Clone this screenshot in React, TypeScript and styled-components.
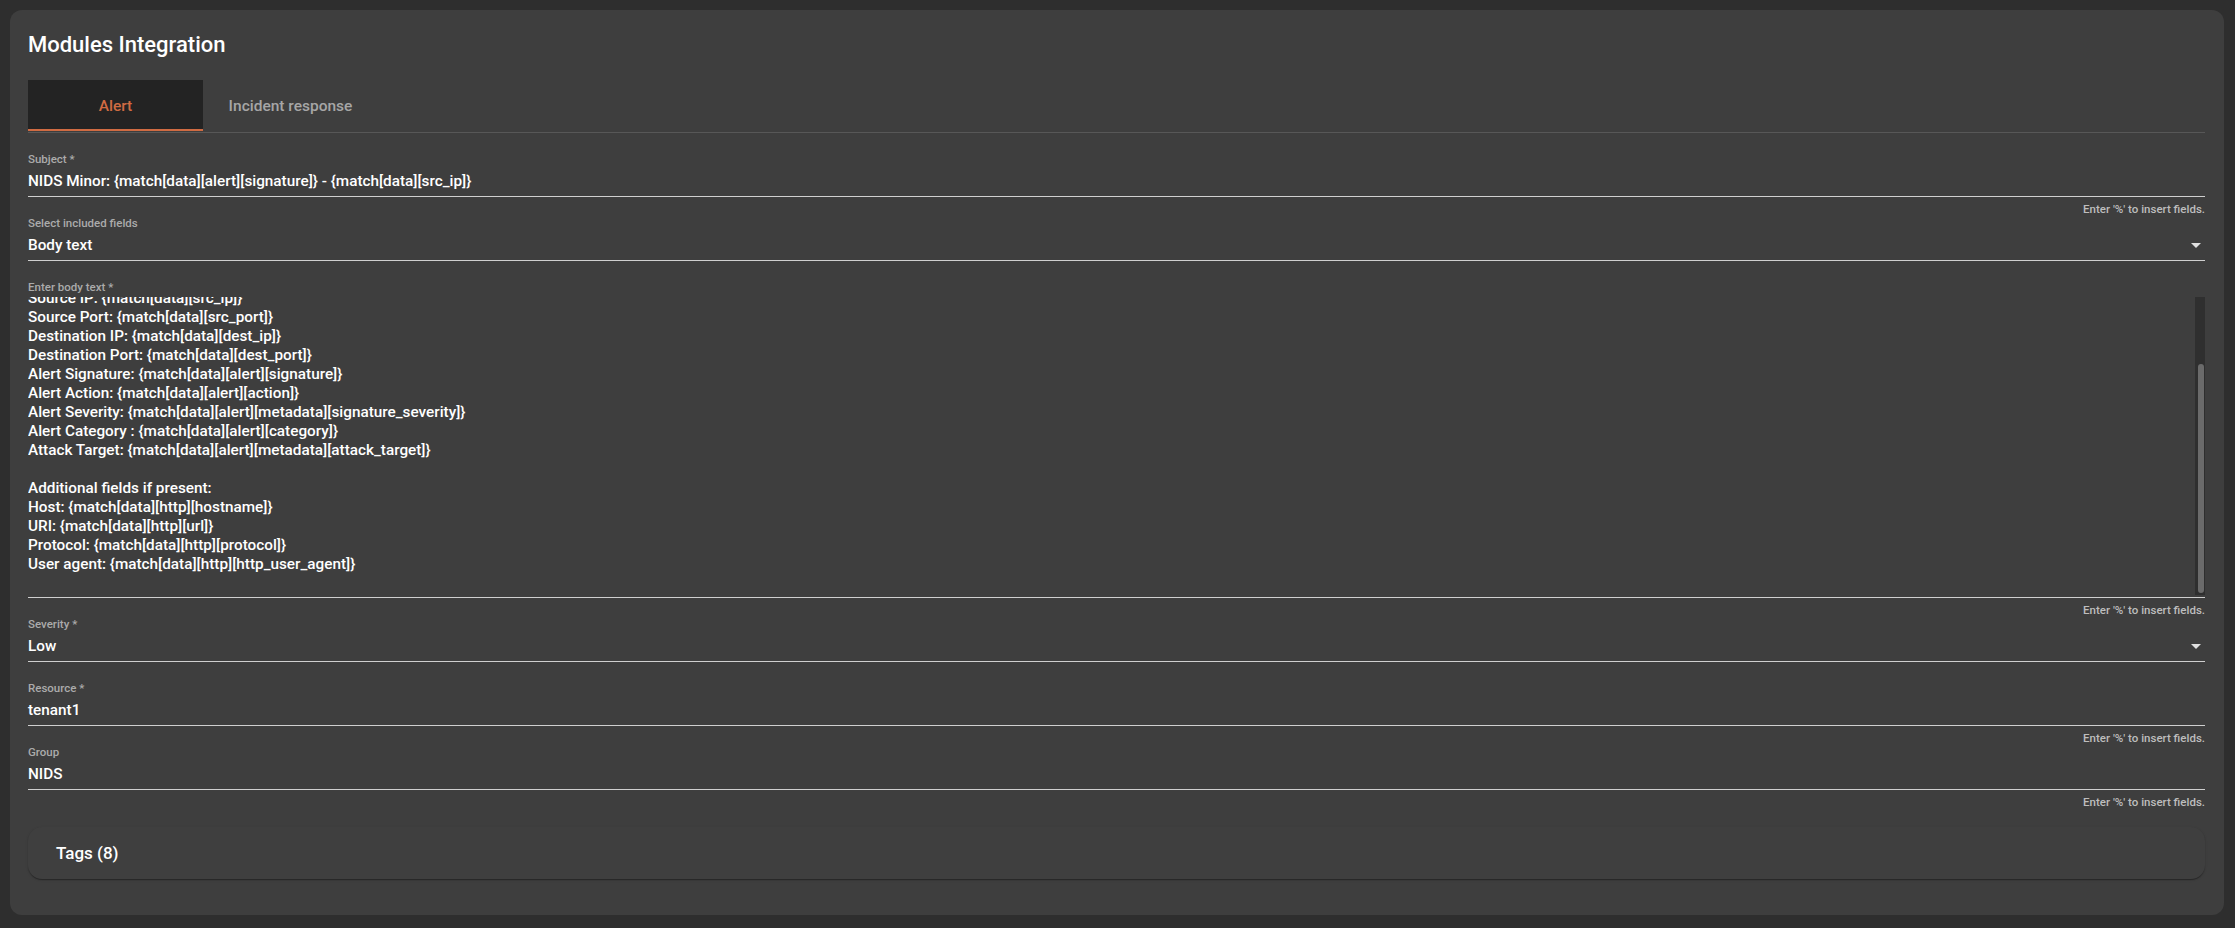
import React, { useLayoutEffect, useRef, useState } from "react";
import styled, { createGlobalStyle } from "styled-components";

const GlobalStyle = createGlobalStyle`
  html, body { margin: 0; padding: 0; background: #2e2e2e; }
  body {
    font-family: Roboto, "Noto Sans", "Liberation Sans", sans-serif;
    color: #ffffff;
  }
  * { box-sizing: border-box; }
`;

const Page = styled.div`
  padding: 10px 11px 13px 10px;
`;

const Card = styled.section`
  background: #3e3e3e;
  border-radius: 12px;
  padding: 21px 19px 36px 18px;
`;

const Title = styled.h1`
  margin: 0 0 21px;
  font-size: 22px;
  line-height: 28px;
  font-weight: 500;
  color: #ffffff;
`;

const TabBar = styled.div`
  display: flex;
  padding-bottom: 1px;
  border-bottom: 1px solid #575757;
`;

const Tab = styled.div<{ $active?: boolean }>`
  width: 175px;
  height: 51px;
  padding-top: 3px;
  display: flex;
  align-items: center;
  justify-content: center;
  font-size: 15.5px;
  font-weight: 500;
  color: ${(p) => (p.$active ? "#d06b42" : "#a6a6a6")};
  background: ${(p) => (p.$active ? "#232323" : "transparent")};
  border-bottom: 2px solid ${(p) => (p.$active ? "#d06b42" : "transparent")};
`;

const Form = styled.div`
  margin-top: 19px;
  display: flex;
  flex-direction: column;
`;

const Field = styled.div`
  display: flex;
  flex-direction: column;
`;

const Label = styled.label`
  font-size: 11.5px;
  line-height: 14px;
  font-weight: 500;
  color: #ababab;
`;

const InputRow = styled.div`
  position: relative;
  margin-top: 6px;
  padding-bottom: 5px;
  border-bottom: 1px solid #cfcfcf;
`;

const Value = styled.div`
  font-size: 15.3px;
  line-height: 19px;
  font-weight: 500;
  color: #ffffff;
  white-space: nowrap;
`;

const Arrow = styled.svg`
  position: absolute;
  right: 4px;
  top: 7px;
  width: 10px;
  height: 5px;
`;

const Helper = styled.div`
  margin-top: 5px;
  height: 14px;
  font-size: 11.5px;
  line-height: 14px;
  font-weight: 500;
  color: #bdbdbd;
  text-align: right;
`;

const TextAreaRow = styled.div`
  margin-top: 3px;
  padding-bottom: 2px;
  border-bottom: 1px solid #cfcfcf;
`;

const TextAreaWrap = styled.div`
  position: relative;
`;

const BodyText = styled.textarea`
  display: block;
  width: 100%;
  height: 298px;
  padding: 4px 12px 2px 0;
  margin: 0;
  border: none;
  outline: none;
  resize: none;
  background: transparent;
  color: #ffffff;
  font-family: inherit;
  font-size: 15.3px;
  line-height: 19px;
  font-weight: 500;
  overflow-y: scroll;
  white-space: pre-wrap;
  scrollbar-width: none;
  &::-webkit-scrollbar { display: none; }
`;

const ScrollTrack = styled.div`
  position: absolute;
  top: 0;
  bottom: 0;
  right: 0;
  width: 10px;
  background: #2f2f2f;
`;

const ScrollThumb = styled.div`
  position: absolute;
  left: 3px;
  width: 6px;
  border-radius: 3px;
  background: #6b6b6b;
`;

const Accordion = styled.div`
  margin-top: 18px;
  height: 52px;
  border-radius: 14px;
  background: #3f3f3f;
  box-shadow: 0 2px 1px -1px rgba(0, 0, 0, 0.2), 0 1px 1px 0 rgba(0, 0, 0, 0.14),
    0 1px 3px 0 rgba(0, 0, 0, 0.12);
  padding: 0 28px;
  display: flex;
  align-items: center;
  font-size: 17px;
  font-weight: 500;
  color: #ffffff;
`;

const HINT = "Enter '%' to insert fields.";

const BODY = [
  "NIDS alert received on {match[agent][name]}",
  "Timestamp: {match[timestamp]}",
  "Rule: {match[rule][description]}",
  "",
  "Source IP: {match[data][src_ip]}",
  "Source Port: {match[data][src_port]}",
  "Destination IP: {match[data][dest_ip]}",
  "Destination Port: {match[data][dest_port]}",
  "Alert Signature: {match[data][alert][signature]}",
  "Alert Action: {match[data][alert][action]}",
  "Alert Severity: {match[data][alert][metadata][signature_severity]}",
  "Alert Category : {match[data][alert][category]}",
  "Attack Target: {match[data][alert][metadata][attack_target]}",
  "",
  "Additional fields if present:",
  "Host: {match[data][http][hostname]}",
  "URI: {match[data][http][url]}",
  "Protocol: {match[data][http][protocol]}",
  "User agent: {match[data][http][http_user_agent]}",
  "",
].join("\n");

const DropArrow = () => (
  <Arrow viewBox="0 0 10 5">
    <polygon points="0,0 10,0 5,5" fill="#e0e0e0" />
  </Arrow>
);

const TextField = ({
  label,
  value,
  hint,
  select,
}: {
  label: string;
  value: string;
  hint?: string;
  select?: boolean;
}) => (
  <Field>
    <Label>{label}</Label>
    <InputRow>
      <Value>{value}</Value>
      {select && <DropArrow />}
    </InputRow>
    <Helper>{hint}</Helper>
  </Field>
);

export default function App() {
  const ref = useRef<HTMLTextAreaElement>(null);
  const [thumb, setThumb] = useState({ top: 66, height: 231 });

  const update = () => {
    const el = ref.current;
    if (!el) return;
    const avail = el.clientHeight - 2;
    const h = Math.max(20, (avail * el.clientHeight) / el.scrollHeight);
    const top = (avail * el.scrollTop) / el.scrollHeight;
    setThumb({ top, height: h });
  };

  useLayoutEffect(() => {
    const el = ref.current;
    if (el) {
      el.scrollTop = el.scrollHeight;
      update();
    }
  }, []);

  return (
    <>
      <GlobalStyle />
      <Page>
        <Card>
          <Title>Modules Integration</Title>
          <TabBar>
            <Tab $active>Alert</Tab>
            <Tab>Incident response</Tab>
          </TabBar>
          <Form>
            <TextField
              label="Subject *"
              value="NIDS Minor: {match[data][alert][signature]} - {match[data][src_ip]}"
              hint={HINT}
            />
            <TextField label="Select included fields" value="Body text" select />
            <Field>
              <Label>Enter body text *</Label>
              <TextAreaRow>
                <TextAreaWrap>
                  <BodyText ref={ref} defaultValue={BODY} spellCheck={false} onScroll={update} />
                  <ScrollTrack>
                    <ScrollThumb style={{ top: thumb.top, height: thumb.height }} />
                  </ScrollTrack>
                </TextAreaWrap>
              </TextAreaRow>
              <Helper>{HINT}</Helper>
            </Field>
            <TextField label="Severity *" value="Low" select />
            <TextField label="Resource *" value="tenant1" hint={HINT} />
            <TextField label="Group" value="NIDS" hint={HINT} />
          </Form>
          <Accordion>Tags (8)</Accordion>
        </Card>
      </Page>
    </>
  );
}
